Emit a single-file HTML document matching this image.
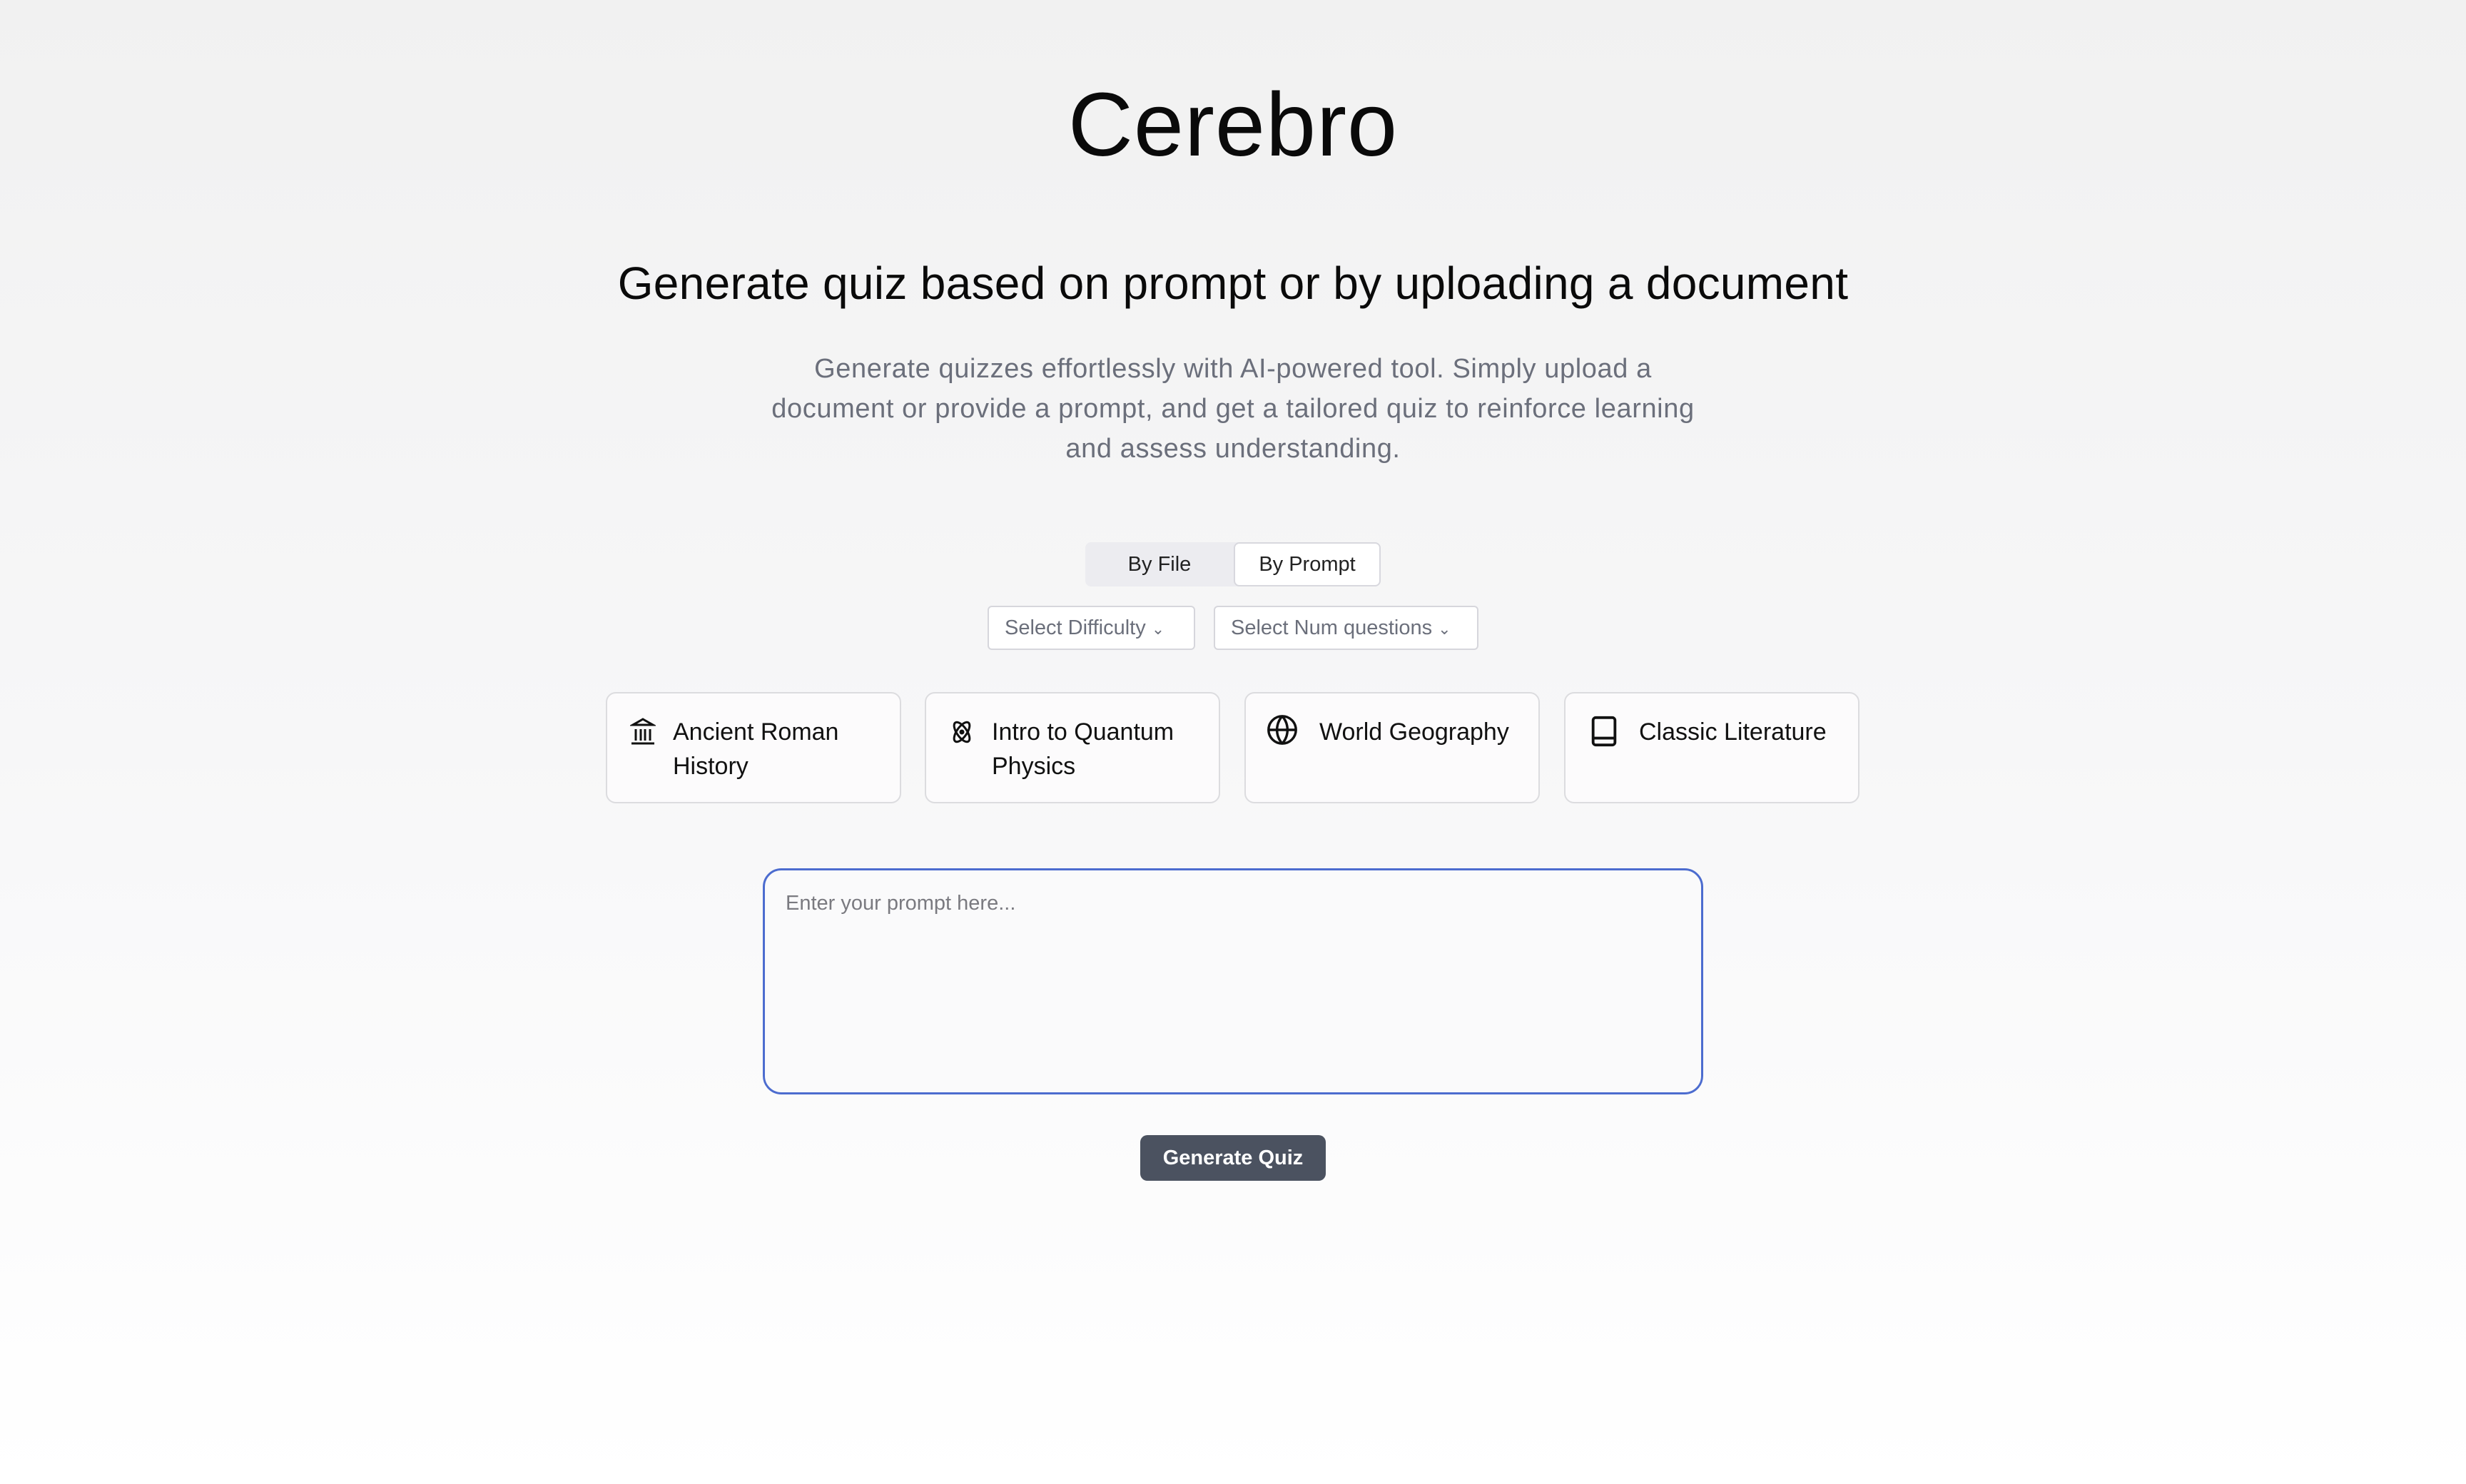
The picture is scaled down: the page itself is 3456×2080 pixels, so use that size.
<!DOCTYPE html>
<html><head><meta charset="utf-8"><style>
*{box-sizing:border-box;margin:0;padding:0}
html,body{width:3456px;height:2080px;overflow:hidden}
body{background:linear-gradient(#f1f1f1 0%,#f7f7f8 50%,#ffffff 100%);font-family:"Liberation Sans",sans-serif;color:#111;position:relative}
.abs{position:absolute}
.c{left:0;width:3456px;text-align:center}
h1{font-weight:400;font-size:126px;top:102px;letter-spacing:1px;color:#0a0a0a}
h2{font-weight:400;font-size:64px;top:360px;letter-spacing:0.3px;color:#0a0a0a}
p.d{left:0;width:3456px;top:489px;font-size:38px;line-height:56px;color:#6b6f7b;text-align:center;letter-spacing:0.6px}
.tabs{left:1521px;top:760px;width:414px;height:62px;background:#ececf0;border-radius:8px}
.tab{position:absolute;top:0;height:62px;line-height:62px;font-size:29px;text-align:center;color:#222}
.sel{top:849px;height:62px;border:2px solid #d6d6dc;border-radius:6px;background:#fff;font-size:29px;color:#6b6f7b;line-height:58px;padding-left:22px}
.card{top:970px;width:414px;height:156px;border:2px solid #dcdcdf;border-radius:14px;background:#fcfbfc}
.card .t{position:absolute;left:92px;top:30px;font-size:34px;line-height:48px;color:#111}
.card svg{position:absolute;left:32px;top:34px}
.ta{left:1069px;top:1217px;width:1318px;height:317px;border:3px solid #4c6ccf;border-radius:26px;background:#fafafb}
.ta span{position:absolute;left:29px;top:30px;font-size:29px;color:#7a7a80}
.btn{left:1598px;top:1591px;width:260px;height:64px;background:#4b5260;border-radius:10px;color:#fff;font-size:29px;font-weight:700;text-align:center;line-height:64px}
</style></head><body>
<h1 class="abs c">Cerebro</h1>
<h2 class="abs c">Generate quiz based on prompt or by uploading a document</h2>
<p class="abs d">Generate quizzes effortlessly with AI-powered tool. Simply upload a<br>document or provide a prompt, and get a tailored quiz to reinforce learning<br>and assess understanding.</p>
<div class="abs tabs">
 <div class="tab" style="left:0;width:208px">By File</div>
 <div class="tab" style="left:208px;width:206px;background:#fff;border:2px solid #d8d8de;border-radius:8px;line-height:58px">By Prompt</div>
</div>
<div class="abs sel" style="left:1384px;width:291px">Select Difficulty <span style="font-size:22px">&#8964;</span></div>
<div class="abs sel" style="left:1701px;width:371px">Select Num questions <span style="font-size:22px">&#8964;</span></div>

<div class="abs card" style="left:849px"><svg width="36" height="40" viewBox="0 0 18 20" fill="none" stroke="#111" stroke-width="1.5"><path d="M9 1 L16 5 H2 Z"/><path d="M4 8v8M7.5 8v8M10.5 8v8M14 8v8M1 18h16"/></svg><div class="t">Ancient Roman<br>History</div></div>
<div class="abs card" style="left:1296px"><svg width="36" height="40" viewBox="0 0 18 20" fill="none" stroke="#111" stroke-width="1.5"><ellipse cx="9" cy="10" rx="3.5" ry="8" transform="rotate(35 9 10)"/><ellipse cx="9" cy="10" rx="3.5" ry="8" transform="rotate(-35 9 10)"/><circle cx="9" cy="10" r="1" fill="#111"/></svg><div class="t">Intro to Quantum<br>Physics</div></div>
<div class="abs card" style="left:1744px"><svg width="46" height="46" viewBox="0 0 24 24" fill="none" stroke="#111" stroke-width="1.8" style="top:28px;left:28px"><circle cx="12" cy="12" r="10"/><path d="M2 12h20M12 2a15 15 0 0 1 0 20M12 2a15 15 0 0 0 0 20"/></svg><div class="t" style="left:103px">World Geography</div></div>
<div class="abs card" style="left:2192px"><svg width="40" height="46" viewBox="0 0 20 24" fill="none" stroke="#111" stroke-width="2" style="top:30px;left:34px"><rect x="2" y="2" width="16" height="20" rx="2"/><path d="M2 17h16"/></svg><div class="t" style="left:103px">Classic Literature</div></div>

<div class="abs ta"><span>Enter your prompt here...</span></div>
<div class="abs btn">Generate Quiz</div>
</body></html>
